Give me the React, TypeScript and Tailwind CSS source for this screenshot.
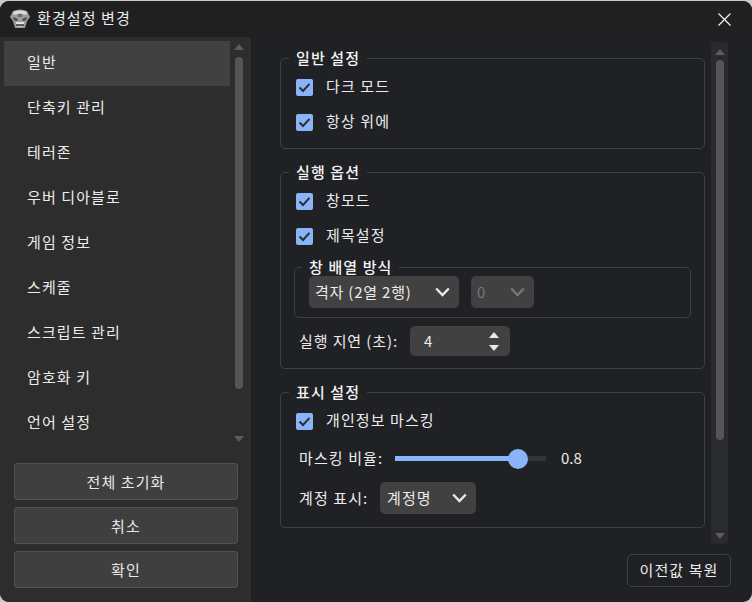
import React from "react";

const menuItems = ["일반", "단축키 관리", "테러존", "우버 디아블로", "게임 정보", "스케줄", "스크립트 관리", "암호화 키", "언어 설정"];

function Check({ label }: { label: string }) {
  return (
    <div className="flex h-[24px] items-center">
      <span className="flex h-[17px] w-[17px] items-center justify-center rounded-[2px] bg-[#8ab4f8]">
        <svg width="13" height="13" viewBox="0 0 13 13" fill="none" stroke="#2b2d33" strokeWidth="2">
          <path d="M1.5 6.5 L5 10 L11.5 2.8" />
        </svg>
      </span>
      <span className="ml-[13px] -translate-y-[1px]">{label}</span>
    </div>
  );
}

function Chevron({ color = "#e8e8e8" }: { color?: string }) {
  return (
    <svg width="15" height="10" viewBox="0 0 15 10" fill="none" stroke={color} strokeWidth="2.4">
      <path d="M1.2 1.5 L7.5 8 L13.8 1.5" />
    </svg>
  );
}

function Group({ title, className, children }: { title: string; className: string; children: React.ReactNode }) {
  return (
    <fieldset className={"min-w-0 rounded-[5px] border border-[#3f4042] " + className}>
      <legend className="-ml-[7px] -translate-y-[1px] px-[7px] text-[15px] leading-[15px] font-medium text-[#f4f4f4]">{title}</legend>
      {children}
    </fieldset>
  );
}

function ScrollArrow({ up, color }: { up?: boolean; color: string }) {
  return (
    <svg width="10" height="6" viewBox="0 0 10 6" fill={color}>
      <path d={up ? "M5 0 L10 6 L0 6 Z" : "M0 0 L10 0 L5 6 Z"} />
    </svg>
  );
}

function SideButton({ label }: { label: string }) {
  return (
    <button className="h-[37px] w-[224px] rounded-[3px] border border-[#525252] bg-[#3f3f3f] pt-[1px] text-[#e8e8e8]">{label}</button>
  );
}

function Logo() {
  return (
    <svg width="20" height="20" viewBox="0 0 20 20">
      <path d="M3 2 Q10 -1 17 2 L20 8 L17 12 L15 19 L5 19 L3 12 L0 8 Z" fill="#9c9c9c" />
      <path d="M3 3 Q10 0 17 3 L16 6 Q10 3 4 6 Z" fill="#dcdcdc" />
      <path d="M8 5 H12 V8 H8 Z" fill="#6a6a6a" />
      <path d="M3 8 L8 10 L7 12 L4 11 Z M17 8 L12 10 L13 12 L16 11 Z" fill="#4a4a4a" />
      <path d="M6 13 H14 V15 H6 Z" fill="#e2e2e2" />
      <path d="M6 15 H14 V17 H6 Z" fill="#5a5a5a" />
      <path d="M7 17 H13 V18 H7 Z" fill="#bcbcbc" />
    </svg>
  );
}

export default function App() {
  return (
    <div className="h-[602px] w-[752px] overflow-hidden bg-[#c9c9c9] pt-[1px] font-['Noto_Sans_CJK_KR',sans-serif] text-[15px] tracking-[1.1px] text-[#ececec]">
      <div className="flex h-[601px] flex-col overflow-hidden rounded-[9px] bg-[#202124]">
        {/* title bar */}
        <div className="flex h-[36px] shrink-0 items-center bg-[#202020] pl-[10px] pr-[21px]">
          <Logo />
          <span className="ml-[7px] flex-1 -translate-y-[1px]">환경설정 변경</span>
          <svg width="13" height="13" viewBox="0 0 13 13" stroke="#f2f2f2" strokeWidth="1.2">
            <path d="M0.5 0.5 L12.5 12.5 M12.5 0.5 L0.5 12.5" />
          </svg>
        </div>

        <div className="flex min-h-0 flex-1">
          {/* sidebar */}
          <div className="flex w-[251px] shrink-0 flex-col bg-[#2d2d2d]">
            <div className="flex h-[411px] pl-[4px] pt-[4px]">
              <div className="w-[226px]">
                {menuItems.map((item, i) => (
                  <div key={item} className={"flex h-[45px] items-center pb-[3px] pl-[23px] " + (i === 0 ? "bg-[#414141]" : "")}>
                    {item}
                  </div>
                ))}
              </div>
              <div className="ml-[4px] flex h-[401px] w-[10px] flex-col items-center">
                <div className="mt-[3px]"><ScrollArrow up color="#5c5c5c" /></div>
                <div className="mt-[7px] h-[332px] w-[8px] rounded-[4px] bg-[#555555]" />
                <div className="mt-auto"><ScrollArrow color="#5c5c5c" /></div>
              </div>
            </div>
            <div className="mt-[15px] flex flex-col gap-[7px] pl-[14px]">
              <SideButton label="전체 초기화" />
              <SideButton label="취소" />
              <SideButton label="확인" />
            </div>
          </div>

          {/* content */}
          <div className="flex flex-1 flex-col pl-[29px]">
            <div className="flex h-[505px] pt-[5px]">
              <div className="flex w-[425px] flex-col">
                <Group title="일반 설정" className="mt-[9px] h-[98px] px-[15px] pt-[9px]">
                  <div className="flex flex-col gap-[11px]">
                    <Check label="다크 모드" />
                    <Check label="항상 위에" />
                  </div>
                </Group>

                <Group title="실행 옵션" className="mt-[16px] h-[204px] pl-[15px] pr-[8px] pt-[9px]">
                  <div className="flex flex-col gap-[11px]">
                    <Check label="창모드" />
                    <Check label="제목설정" />
                  </div>
                  <Group title="창 배열 방식" className="mt-[12px] -ml-[2px] h-[58px] w-[397px] pl-[14px] pt-[1px]">
                    <div className="flex gap-[12px] tracking-[0.8px]">
                      <div className="flex h-[32px] w-[150px] items-center justify-between rounded-[5px] bg-[#414141] pl-[6px] pr-[9px]">
                        <span>격자 (2열 2행)</span>
                        <Chevron />
                      </div>
                      <div className="flex h-[32px] w-[63px] items-center justify-between rounded-[5px] bg-[#414141] pl-[6px] pr-[9px] text-[#777777]">
                        <span>0</span>
                        <Chevron color="#777777" />
                      </div>
                    </div>
                  </Group>
                  <div className="mt-[8px] flex items-center pl-[3px]">
                    <span className="w-[111px] whitespace-nowrap tracking-[0.9px]">실행 지연 (초):</span>
                    <div className="flex h-[30px] w-[100px] items-center justify-between rounded-[5px] bg-[#414141] pl-[14px] pr-[11px]">
                      <span>4</span>
                      <div className="flex flex-col gap-[7px]">
                        <ScrollArrow up color="#e8e8e8" />
                        <ScrollArrow color="#e8e8e8" />
                      </div>
                    </div>
                  </div>
                </Group>

                <Group title="표시 설정" className="mt-[16px] h-[143px] px-[15px] pt-[9px]">
                  <Check label="개인정보 마스킹" />
                  <div className="mt-[13px] flex h-[24px] items-center pl-[3px]">
                    <span className="w-[96px] whitespace-nowrap">마스킹 비율:</span>
                    <div className="relative h-[5px] w-[151px] bg-[#333436]">
                      <div className="h-full w-[124px] bg-[#8ab4f8]" />
                      <div className="absolute left-[113px] top-[-7px] h-[20px] w-[20px] rounded-full bg-[#8ab4f8]" />
                    </div>
                    <span className="ml-[15px] tracking-normal">0.8</span>
                  </div>
                  <div className="mt-[12px] flex items-center pl-[3px]">
                    <span className="w-[81px] whitespace-nowrap">계정 표시:</span>
                    <div className="flex h-[32px] w-[96px] items-center justify-between rounded-[5px] bg-[#414141] pl-[7px] pr-[9px]">
                      <span>계정명</span>
                      <Chevron />
                    </div>
                  </div>
                </Group>
              </div>

              <div className="ml-[6px] flex h-[502px] w-[17px] flex-col items-center rounded-[4px] bg-[#2a2b2e]">
                <div className="mt-[7px]"><ScrollArrow up color="#5c5c5c" /></div>
                <div className="mt-[5px] h-[380px] w-[8px] rounded-[4px] bg-[#555555]" />
                <div className="mt-auto mb-[5px]"><ScrollArrow color="#5c5c5c" /></div>
              </div>
            </div>

            <div className="mt-[12px] flex justify-end pr-[21px]">
              <button className="h-[33px] w-[104px] rounded-[5px] border border-[#3f4042] text-[#ececec]">이전값 복원</button>
            </div>
          </div>
        </div>
      </div>
    </div>
  );
}
